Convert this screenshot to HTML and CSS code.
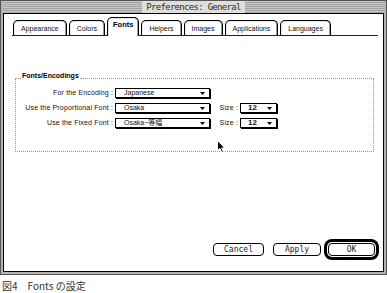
FILE: index.html
```html
<!DOCTYPE html>
<html>
<head>
<meta charset="utf-8">
<link rel="stylesheet" href="styles.css">
</head>
<body>
<div class="window">
  <div class="titlebar"><span class="title">Preferences: General</span></div>
  <div class="content">
    <div class="tabs">
      <div class="tab">Appearance</div>
      <div class="tab">Colors</div>
      <div class="tab selected">Fonts</div>
      <div class="tab">Helpers</div>
      <div class="tab">Images</div>
      <div class="tab">Applications</div>
      <div class="tab">Languages</div>
    </div>
    <div class="panel">
      <div class="group">
        <div class="group-head"><span class="group-title">Fonts/Encodings</span></div>
        <div class="group-body">
          <div class="label">For the Encoding :</div>
          <div class="popup"><span>Japanese</span><svg class="tri" width="5" height="3" viewBox="0 0 5 3"><polygon points="0,0 5,0 2.5,3" fill="#000"/></svg></div>
          <div></div><div></div>

          <div class="label">Use the Proportional Font :</div>
          <div class="popup"><span>Osaka</span><svg class="tri" width="5" height="3" viewBox="0 0 5 3"><polygon points="0,0 5,0 2.5,3" fill="#000"/></svg></div>
          <div class="label">Size :</div>
          <div class="popup size"><span class="num">12</span><svg class="tri" width="5" height="3" viewBox="0 0 5 3"><polygon points="0,0 5,0 2.5,3" fill="#000"/></svg></div>

          <div class="label">Use the Fixed Font :</div>
          <div class="popup"><span>Osaka−等幅</span><svg class="tri" width="5" height="3" viewBox="0 0 5 3"><polygon points="0,0 5,0 2.5,3" fill="#000"/></svg></div>
          <div class="label">Size :</div>
          <div class="popup size"><span class="num">12</span><svg class="tri" width="5" height="3" viewBox="0 0 5 3"><polygon points="0,0 5,0 2.5,3" fill="#000"/></svg></div>
        </div>
      </div>
      <div class="buttons">
        <div class="btn cancel">Cancel</div>
        <div class="btn apply">Apply</div>
        <div class="btn ok">OK</div>
      </div>
    </div>
    <svg class="cursor" width="9" height="14" viewBox="0 0 9 14"><polygon points="0.5,0.5 0.5,10.5 3,8.5 4.8,12.8 6.4,12 4.7,8 7.8,8 " fill="#000" stroke="#fff" stroke-width="1"/></svg>
  </div>
</div>
<div class="caption">図4　Fonts の設定</div>
</body>
</html>
```
FILE: styles.css
```css
* { box-sizing: border-box; }
body {
  margin: 0;
  background: #fff;
  font-family: "Liberation Sans", "Noto Sans CJK JP", sans-serif;
}
.window {
  width: 387px;
  height: 275px;
  border: 1px solid #555;
  background: #b4b4b4;
  padding: 0 2px 2px 2px;
  display: flex;
  flex-direction: column;
}
.titlebar {
  height: 12px;
  display: flex;
  align-items: center;
  justify-content: center;
  background: repeating-linear-gradient(to bottom, #c8c8c8 0 1px, #a2a2a2 1px 2px);
}
.title {
  background: #dedede;
  padding: 0 4px;
  height: 12px;
  line-height: 12px;
  font-family: "DejaVu Sans Mono", "Liberation Mono", monospace;
  font-size: 9px;
  color: #2a2a2a;
  letter-spacing: -0.7px;
}
.content {
  flex: 1;
  border: 1px solid #000;
  background: #fff;
  display: flex;
  flex-direction: column;
  position: relative;
}
.tabs {
  display: flex;
  align-items: flex-end;
  gap: 2px;
  margin: 0 5px 0 8px;
  padding: 3px 0 0 1px;
  height: 22px;
  border-bottom: 1px solid #222;
}
.tab {
  height: 15px;
  border: 1px solid #000;
  border-bottom: none;
  border-radius: 5px 5px 0 0;
  box-shadow: inset -1px 0 #9a9a9a, inset 1px 1px #e6e6e6;
  background: #fff;
  font-size: 7px;
  line-height: 13px;
  padding: 1px 7px 0 7px;
  color: #111;
  white-space: nowrap;
}
.tab.selected {
  height: 19px;
  margin-bottom: -1px;
  font-weight: bold;
  font-size: 7.5px;
  line-height: 14px;
  padding: 0 5px 0 5px;
  color: #000;
}
.panel {
  flex: 1;
  display: flex;
  flex-direction: column;
}
.group {
  margin: 35px 0 0 11px;
  width: 359px;
}
.group-head {
  display: flex;
  align-items: flex-end;
  height: 8px;
}
.group-head::before {
  content: "";
  width: 6px;
  border-bottom: 1px dotted #999;
}
.group-head::after {
  content: "";
  flex: 1;
  border-bottom: 1px dotted #999;
}
.group-title {
  font-size: 7px;
  font-weight: bold;
  line-height: 8px;
  padding: 0 1px;
  margin-bottom: -1px;
  color: #000;
}
.group-body {
  border: 1px dotted #999;
  border-top: none;
  height: 73px;
  padding: 9px 0 0 0;
  display: grid;
  grid-template-columns: 97px 96px 25px 38px;
  grid-auto-rows: 10px;
  column-gap: 2px;
  row-gap: 5px;
  align-content: start;
}
.label {
  font-size: 7px;
  line-height: 10px;
  text-align: right;
  white-space: nowrap;
  color: #111;
  letter-spacing: 0.15px;
}
.popup {
  width: 95px;
  height: 10px;
  border: 1px solid #000;
  box-shadow: 1px 1px 0 #000;
  display: flex;
  align-items: center;
  justify-content: space-between;
  padding: 0 4px 0 8px;
  font-size: 7px;
  line-height: 8px;
  color: #111;
  white-space: nowrap;
}
.popup.size {
  width: 37px;
  padding: 0 4px 0 7px;
}
.num {
  font-weight: bold;
  font-size: 8px;
}
.tri { display: block; }
.buttons {
  margin-top: auto;
  display: flex;
  justify-content: flex-end;
  gap: 9px;
  padding: 0 8px 15px 0;
}
.btn {
  height: 13px;
  border: 1px solid #000;
  border-radius: 4px;
  font-family: "DejaVu Sans Mono", "Liberation Mono", monospace;
  font-size: 8px;
  line-height: 11px;
  text-align: center;
  color: #222;
  background: #fff;
}
.cancel { width: 51px; }
.apply { width: 48px; }
.ok {
  width: 47px;
  margin-left: -2px;
  box-shadow: 0 0 0 1px #fff, 0 0 0 4px #000;
}
.cursor {
  position: absolute;
  left: 213px;
  top: 126px;
}
.caption {
  margin-top: 4px;
  padding-left: 2px;
  font-family: "Noto Sans CJK JP", "Liberation Sans", sans-serif;
  font-size: 10px;
  line-height: 13px;
  color: #333;
}
```
